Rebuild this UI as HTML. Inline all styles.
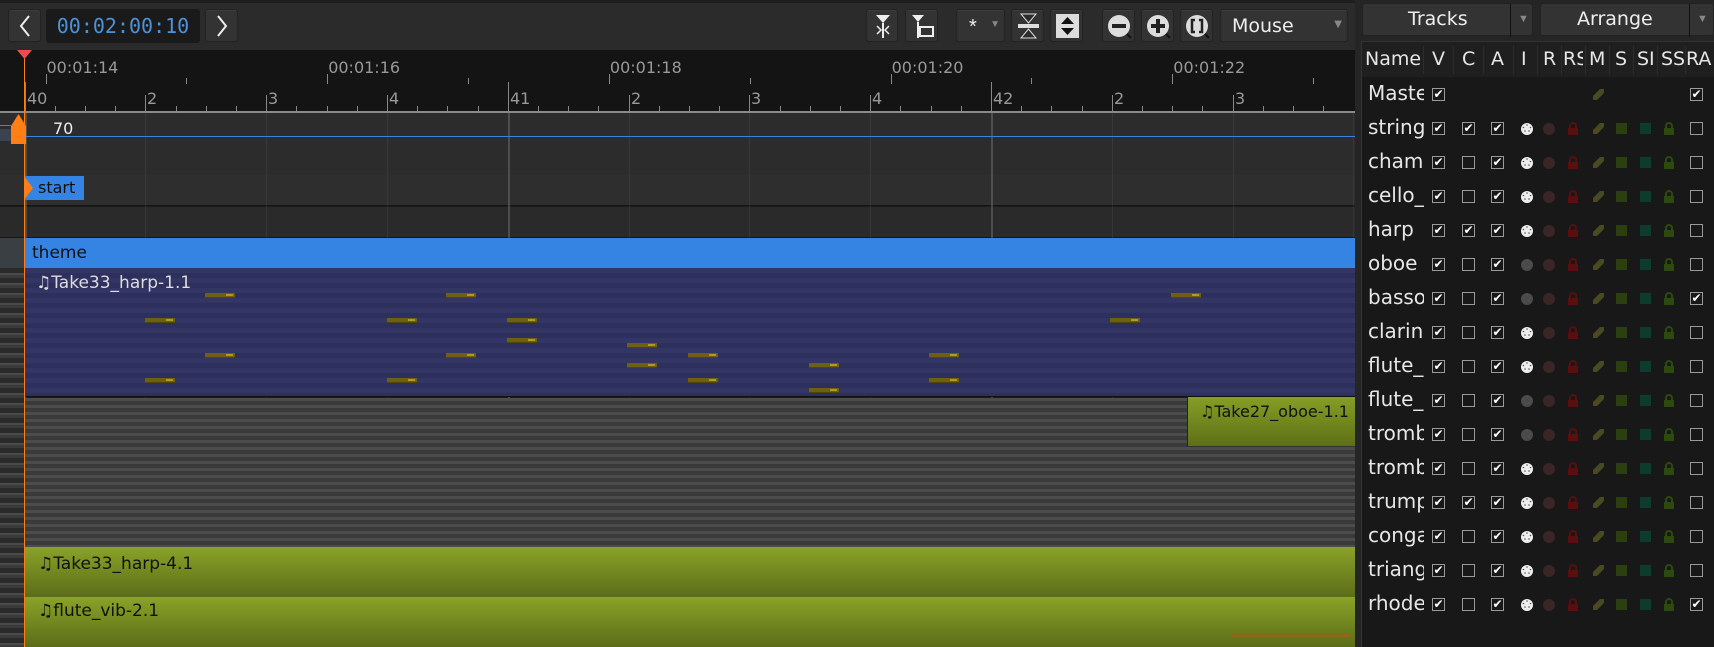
<!DOCTYPE html>
<html><head><meta charset="utf-8"><style>
*{margin:0;padding:0;box-sizing:border-box}
body{width:1714px;height:647px;overflow:hidden;background:#1b1b1b;font-family:"Liberation Sans","DejaVu Sans",sans-serif;position:relative}
.a{position:absolute}
.btn{position:absolute;top:9px;height:33px;background:#333;border:1px solid #222;border-radius:3px;box-shadow:inset 0 1px 0 #3c3c3c}
.lbl{position:absolute;color:#999;font-size:15px;font-family:"DejaVu Sans",sans-serif}
.tk{position:absolute;width:1px;background:#888}
.note{position:absolute;height:5px;width:30px;background:#6e6012;border-bottom:1px solid #4e440c}
.note:after{content:"";position:absolute;right:2px;top:1px;width:7px;height:2px;background:#b09a20}
.rt{position:absolute;font-family:"DejaVu Sans",sans-serif;font-size:15px}
.hd{position:absolute;top:48px;color:#e6e6e6;font-size:19px;font-family:"DejaVu Sans",sans-serif}
.nm{position:absolute;left:1368px;color:#e6e6e6;font-size:20px;font-family:"DejaVu Sans",sans-serif;width:56px;overflow:hidden;white-space:nowrap}
.cb{position:absolute;width:13px;height:13px;border:1px solid #9a9a9a;color:#fff;font-size:12px;line-height:11px;text-align:center}
</style></head><body>
<!-- toolbar -->
<div class="a" style="left:0;top:0;width:1355px;height:50px;background:#2b2b2b;border-top:3px solid #1e1e1e"></div>
<div class="btn" style="left:8px;width:33px"><svg width="33" height="33"><path d="M20 6 L12 16 L20 26" stroke="#eee" stroke-width="2" fill="none"/></svg></div>
<div class="a" style="left:46px;top:9px;width:154px;height:34px;background:#1a1a1a;border-radius:3px;color:#4e92d6;font-size:20px;font-family:'DejaVu Sans Mono',monospace;line-height:34px;text-align:center">00:02:00:10</div>
<div class="btn" style="left:205px;width:33px"><svg width="33" height="33"><path d="M12 6 L20 16 L12 26" stroke="#eee" stroke-width="2" fill="none"/></svg></div>
<div class="btn" style="left:866px;width:32px"><svg width="32" height="32"><path d="M9 5 H23 L16 13 Z" fill="#eee"/><path d="M16 13 V28" stroke="#eee" stroke-width="2"/><path d="M10 16 L14 20 L10 24 M22 16 L18 20 L22 24" stroke="#eee" stroke-width="1.5" fill="none"/></svg></div>
<div class="btn" style="left:905px;width:33px"><svg width="33" height="32"><path d="M6 5 H18 L12 12 Z" fill="#eee"/><path d="M12 12 V28" stroke="#eee" stroke-width="2"/><rect x="14" y="17" width="13" height="9" fill="none" stroke="#eee" stroke-width="2"/></svg></div>
<div class="btn" style="left:956px;width:49px;color:#eee;font-size:20px;padding:6px 0 0 12px">*<span style="position:absolute;right:4px;top:9px;font-size:10px;color:#888">▼</span></div>
<div class="btn" style="left:1011px;width:33px"><svg width="33" height="32"><path d="M9 4 H24 L16.5 13 Z M9 28 H24 L16.5 19 Z" fill="#2b2b2b" stroke="#ddd"/><rect x="6" y="14" width="21" height="4" fill="#ddd"/></svg></div>
<div class="btn" style="left:1050px;width:33px"><svg width="33" height="32"><rect x="5" y="4" width="23" height="24" fill="#ddd"/><path d="M10 14 H23 L16.5 7 Z M10 18 H23 L16.5 25 Z" fill="#111"/></svg></div>
<div class="btn" style="left:1102px;width:33px"><svg width="33" height="32"><circle cx="16" cy="16" r="11" fill="#ddd"/><path d="M24 24 l4 4" stroke="#111" stroke-width="2"/><rect x="9" y="14" width="14" height="4" fill="#222"/></svg></div>
<div class="btn" style="left:1141px;width:33px"><svg width="33" height="32"><circle cx="16" cy="16" r="11" fill="#ddd"/><path d="M24 24 l4 4" stroke="#111" stroke-width="2"/><rect x="9" y="14" width="14" height="4" fill="#222"/><rect x="14" y="9" width="4" height="14" fill="#222"/></svg></div>
<div class="btn" style="left:1180px;width:33px"><svg width="33" height="32"><circle cx="16" cy="16" r="11" fill="#ddd"/><path d="M24 24 l4 4" stroke="#111" stroke-width="2"/><path d="M14 10 H11 V22 H14 M18 10 H21 V22 H18" stroke="#222" stroke-width="2.5" fill="none"/></svg></div>
<div class="btn" style="left:1220px;width:128px;color:#eee;font-size:19px;padding:5px 0 0 11px;font-family:'DejaVu Sans',sans-serif">Mouse<span style="position:absolute;right:5px;top:9px;font-size:10px;color:#888">▼</span></div>
<!-- ruler -->
<div class="a" id="ruler" style="left:0;top:50px;width:1355px;height:63px;background:#141414;border-bottom:2px solid #8a8a8a"></div>
<!-- lanes -->
<div class="a" style="left:0;top:113px;width:1355px;height:62px;background:#2c2c2c"></div>
<div class="a" style="left:0;top:175px;width:1355px;height:31px;background:#2e2e2e;border-bottom:1px solid #151515"></div>
<div class="a" style="left:0;top:207px;width:1355px;height:31px;background:#2a2a2a;border-bottom:1px solid #151515"></div>
<div class="a" id="grid" style="left:0;top:113px;width:1355px;height:534px"></div>
<div class="a" style="left:25px;top:136px;width:1330px;height:1px;background:#3a84e0"></div>
<div class="a" style="left:0;top:125px;width:11px;height:1px;background:#3a84e0"></div>
<div class="a" style="left:0;top:129px;width:12px;height:12px;background:#3a4350"></div>
<svg class="a" style="left:10px;top:114px" width="17" height="30"><path d="M1 12 L8.5 0 L16 12 V30 H1 Z" fill="#ff7f16"/></svg>
<div class="rt" style="left:53px;top:119px;color:#eee;font-size:16px">70</div>
<div class="a" style="left:24px;top:176px;width:60px;height:24px;background:#3584e4;color:#111;font-size:16px;font-family:'DejaVu Sans',sans-serif;padding:2px 0 0 14px">start</div>
<svg class="a" style="left:24px;top:176px" width="10" height="24"><path d="M0 0 L9 12 L0 24 Z" fill="#ff7f16"/></svg>
<!-- theme -->
<div class="a" style="left:0;top:238px;width:24px;height:30px;background:#3a3f44"></div>
<div class="a" style="left:24px;top:238px;width:1331px;height:30px;background:#3584e4;color:#111;font-size:17px;font-family:'DejaVu Sans',sans-serif;padding:5px 0 0 8px">theme</div>
<!-- harp region -->
<div class="a" style="left:0;top:268px;width:24px;height:379px;background:repeating-linear-gradient(#2a2a2a 0 5px,#4a4a4a 5px 7px,#3a3a3a 7px 10px)"></div>
<div class="a" id="harp" style="left:24px;top:268px;width:1331px;height:129px;background:repeating-linear-gradient(#333565 0 5px,#2d2f5c 5px 10px);border-bottom:1px solid #111">
<div class="rt" style="left:12px;top:5px;color:#ddd;font-size:17px">♫Take33_harp-1.1</div></div>
<div class="a" style="left:24px;top:398px;width:1331px;height:149px;background:repeating-linear-gradient(#4c4c4c 0 3px,#3a3a3a 3px 7px)"></div>
<div class="a" style="left:1187px;top:397px;width:168px;height:50px;background:linear-gradient(#869e26,#5e7016);border-left:1px solid #222;border-bottom:1px solid #333;color:#111;font-size:16px;font-family:'DejaVu Sans',sans-serif;padding:5px 0 0 12px">♫Take27_oboe-1.1</div>
<div class="a" style="left:24px;top:547px;width:1331px;height:50px;background:linear-gradient(#8aa328,#5c6c18);color:#111;font-size:17px;font-family:'DejaVu Sans',sans-serif;padding:7px 0 0 14px">♫Take33_harp-4.1</div>
<div class="a" style="left:24px;top:597px;width:1331px;height:50px;background:linear-gradient(#8aa328,#5c6c18);color:#111;font-size:17px;font-family:'DejaVu Sans',sans-serif;padding:4px 0 0 14px">♫flute_vib-2.1</div>
<div class="a" style="left:1232px;top:634px;width:118px;height:3px;background:#8a6a18"></div>
<!-- playhead -->
<div class="a" style="left:24px;top:55px;width:1px;height:592px;background:#ff7f16"></div>
<svg class="a" style="left:17px;top:50px" width="15" height="10"><path d="M0 0 H15 L7.5 9 Z" fill="#f04a4a"/></svg>
<!-- right panel -->
<div class="a" style="left:1355px;top:0;width:359px;height:647px;background:#252525"></div>
<div class="a" style="left:1362px;top:3px;width:171px;height:33px;background:#333;border-radius:3px;border:1px solid #222"><span style="position:absolute;left:45px;top:4px;color:#eee;font-size:19px;font-family:'DejaVu Sans',sans-serif">Tracks</span><span style="position:absolute;left:147px;top:0;width:1px;height:33px;background:#111"></span><span style="position:absolute;left:155px;top:9px;font-size:11px;color:#888">▼</span></div>
<div class="a" style="left:1540px;top:3px;width:174px;height:33px;background:#333;border-radius:3px;border:1px solid #222"><span style="position:absolute;left:36px;top:4px;color:#eee;font-size:19px;font-family:'DejaVu Sans',sans-serif">Arrange</span><span style="position:absolute;left:148px;top:0;width:1px;height:33px;background:#111"></span><span style="position:absolute;left:156px;top:9px;font-size:11px;color:#888">▼</span></div>
<div class="a" style="left:1361px;top:41px;width:353px;height:606px;background:#181818;border-left:1px solid #333;border-top:1px solid #333"></div>
<div class="a" style="left:1362px;top:42px;width:352px;height:35px;background:#1f1f1f"></div>
<div id="tbl"></div>
<script>
var r=document.getElementById('ruler'),h='';
var tl=['00:01:14','00:01:16','00:01:18','00:01:20','00:01:22'];
for(var i=0;i<5;i++){var x=45.5+i*281.7;h+='<div class="lbl" style="left:'+(x+1)+'px;top:8px;font-size:16px">'+tl[i]+'</div><div class="tk" style="left:'+x+'px;top:24px;height:10px"></div><div class="tk" style="left:'+(x+140.8)+'px;top:28px;height:6px"></div>';}
var bl=['40','2','3','4','41','2','3','4','42','2','3','4'];
for(var j=-1;j<46;j++){var x=24.5+j*30.2;if(x<0||x>1352)continue;var b=(j%4==0);var bar=(j%16==0);
h+='<div class="tk" style="left:'+Math.round(x)+'px;top:'+(bar?32:(b?45:56))+'px;height:'+(bar?31:(b?18:7))+'px"></div>';
if(b&&j>=0)h+='<div class="lbl" style="left:'+(Math.round(x)+2)+'px;top:39px;font-size:16px">'+bl[j/4]+'</div>';}
r.innerHTML=h;
var g=document.getElementById('grid');h='';
for(var j=0;j<12;j++){var x=Math.round(24.5+j*120.8);var bar=(j%4==0);h+='<div class="a" style="left:'+x+'px;top:0;width:'+(bar?2:1)+'px;height:534px;background:'+(bar?'rgba(120,120,120,.45)':'rgba(90,90,90,.25)')+'"></div>';}
g.innerHTML=h;
var hp=document.getElementById('harp');h='';
var n=[[145,320],[205,295],[205,355],[145,380],[387,320],[446,295],[446,355],[387,380],[507,320],[507,340],[627,345],[627,365],[688,355],[688,380],[809,365],[809,390],[929,355],[929,380],[1110,320],[1171,295]];
n.forEach(function(p){h+='<div class="note" style="left:'+(p[0]-24)+'px;top:'+(p[1]-270)+'px"></div>';});
hp.innerHTML+=h;
var t=document.getElementById('tbl');h='';
var cols=[['Name',1365],['V',1432],['C',1462],['A',1491],['I',1521],['R',1543],['RS',1563],['M',1589],['S',1615],['SI',1637],['SS',1661],['RA',1686]];
cols.forEach(function(c,i){h+='<div class="hd" style="left:'+c[1]+'px;'+(c[0]=='RS'?'width:20px;overflow:hidden;':'')+(c[0]=='SS'?'width:24px;overflow:hidden;':'')+'">'+c[0]+'</div>';if(i<11)h+='<div class="a" style="left:'+(1355+[68,98,128,158,182,206,230,254,278,302,330][i])+'px;top:46px;width:1px;height:28px;background:#2c2c2c"></div>';});
var names=['Master','strings','chamber','cello_','harp','oboe','bassoon','clarinet','flute_','flute_v','tromb','tromb','trumpet','conga','triangle','rhodes'];
var cC=[0,1,0,0,1,0,0,0,0,0,0,0,1,0,0,0],ra=[1,0,0,0,0,0,1,0,0,0,0,0,0,0,0,1],gi=[0,0,0,0,0,1,1,0,0,1,1,0,0,0,0,0];
function cb(x,y,c){return '<div class="cb" style="left:'+x+'px;top:'+y+'px">'+(c?'✔':'')+'</div>';}
names.forEach(function(nm,i){var y=95+i*34;h+='<div class="nm" style="top:'+(y-14)+'px">'+nm+'</div>';
h+=cb(1432,y-7,1);
h+='<svg class="a" style="left:1591px;top:'+(y-7)+'px" width="14" height="14"><path d="M2 12 L2 8 L9 1 L13 1 L13 5 L6 12 Z" fill="#4a4a22"/></svg>';
if(i>0){h+=cb(1462,y-7,cC[i])+cb(1491,y-7,1);
h+='<svg class="a" style="left:1520px;top:'+(y-7)+'px" width="14" height="14"><circle cx="7" cy="7" r="6" fill="'+(gi[i]?'#4a4a4a':'#eee')+'"/><circle cx="7" cy="3" r=".8" fill="#555"/><circle cx="3.5" cy="5.5" r=".8" fill="#555"/><circle cx="10.5" cy="5.5" r=".8" fill="#555"/><circle cx="5" cy="9" r=".8" fill="#555"/><circle cx="9" cy="9" r=".8" fill="#555"/></svg>';
h+='<div class="a" style="left:1543px;top:'+(y-6)+'px;width:12px;height:12px;border-radius:6px;background:#3a2626"></div>';
h+='<svg class="a" style="left:1567px;top:'+(y-7)+'px" width="12" height="14"><path d="M3 6 V4 a3 3 0 0 1 6 0 V6" stroke="#5a0e0e" stroke-width="2" fill="none"/><rect x="1" y="6" width="10" height="7" fill="#5a0e0e"/></svg>';
h+='<div class="a" style="left:1616px;top:'+(y-6)+'px;width:11px;height:11px;background:#2c3f11"></div>';
h+='<div class="a" style="left:1640px;top:'+(y-6)+'px;width:11px;height:11px;background:#0d3b2e"></div>';
h+='<svg class="a" style="left:1663px;top:'+(y-7)+'px" width="12" height="14"><path d="M3 6 V4 a3 3 0 0 1 6 0 V6" stroke="#2c4a0c" stroke-width="2" fill="none"/><rect x="1" y="6" width="10" height="7" fill="#2c4a0c"/></svg>';}
h+=cb(1690,y-7,ra[i]);});
t.innerHTML=h;
</script>
</body></html>
